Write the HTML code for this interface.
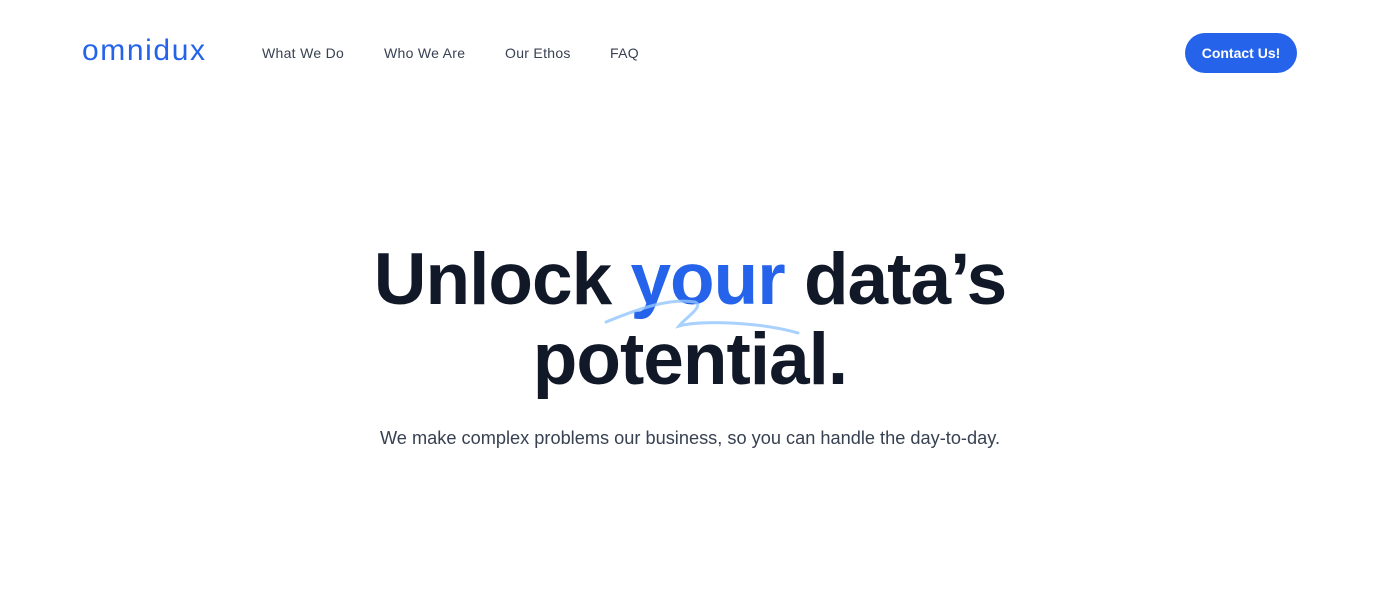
<!DOCTYPE html>
<html><head><meta charset="utf-8"><style>
*{margin:0;padding:0;box-sizing:border-box}
body{width:1396px;height:599px;background:#fff;font-family:"Liberation Sans",sans-serif;position:relative;overflow:hidden}
.logo{position:absolute;left:82px;top:34px;font-size:30px;color:#2563eb;letter-spacing:1.6px}
.nav a{position:absolute;top:45px;font-size:14px;color:#374151;text-decoration:none;letter-spacing:0.3px}
.btn{position:absolute;left:1185px;top:33px;width:112px;height:40px;border-radius:20px;background:#2563eb;color:#fff;font-size:14px;font-weight:bold;text-align:center;line-height:40px}
h1{position:absolute;left:0;width:1380px;top:240px;text-align:center;font-size:73px;line-height:80px;font-weight:bold;color:#111827;letter-spacing:-1px}
h1 span{color:#2563eb}
p{position:absolute;left:0;width:1380px;top:428px;text-align:center;font-size:18.2px;color:#374151}
svg{position:absolute;left:0;top:0}
</style></head><body>
<div class="logo">omnidux</div>
<div class="nav"><a style="left:262px">What We Do</a><a style="left:384px">Who We Are</a><a style="left:505px">Our Ethos</a><a style="left:610px">FAQ</a></div>
<div class="btn">Contact Us!</div>
<h1>Unlock <span>your</span> data’s<br>potential.</h1>
<svg width="1396" height="599"><path d="M606 322 C640 308 670 298 695 302 C705 306 685 318 679 326 C700 320 760 322 798 333" fill="none" stroke="#93c5fd" stroke-width="3" stroke-linecap="round" opacity="0.8"/></svg>
<p>We make complex problems our business, so you can handle the day-to-day.</p>
</body></html>
